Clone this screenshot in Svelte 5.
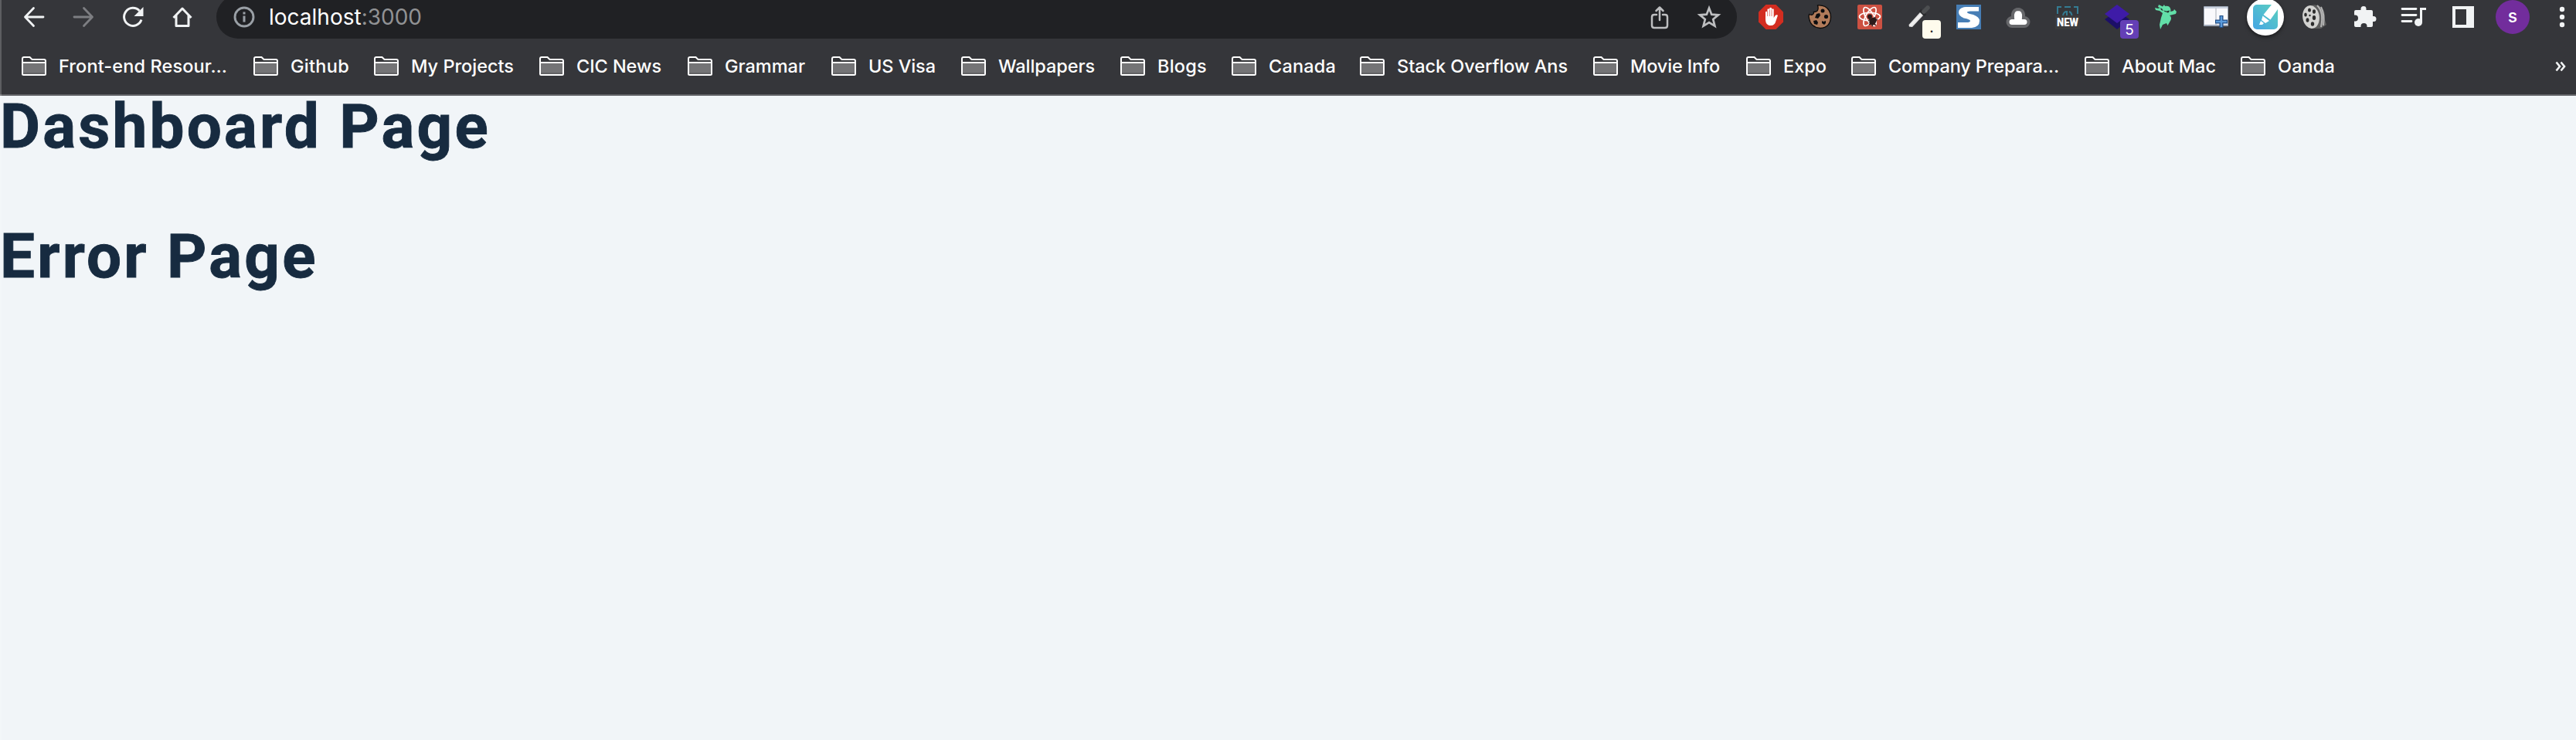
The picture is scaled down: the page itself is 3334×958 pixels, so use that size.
<script>
  const bookmarks = [
    ['Front-end Resour…', 300, 216], ['Github', 156, 74], ['My Projects', 214, 131],
    ['CIC News', 192, 108], ['Grammar', 186, 102], ['US Visa', 168, 85],
    ['Wallpapers', 206, 123], ['Blogs', 144, 62], ['Canada', 166, 85],
    ['Stack Overflow Ans', 302, 219], ['Movie Info', 198, 114], ['Expo', 136, 54],
    ['Company Prepara…', 302, 219], ['About Mac', 202, 120], ['Oanda', 156, 72]
  ];

  function track(node, width) {
    const natural = node.getBoundingClientRect().width;
    node.style.letterSpacing = `${(width + 2 - natural) / node.textContent.length}px`;
  }
</script>

<div class="window">
  <header>
    <div class="toolbar">
      <nav>
        <svg width="32" height="32" viewBox="0 0 32 32" fill="none" stroke="#f1f3f4" stroke-width="2.8" stroke-linecap="round" stroke-linejoin="round"><path d="M28 16H5M15.500 4.500L4.500 16l11 11.500"/></svg>
        <svg width="32" height="32" viewBox="0 0 32 32" fill="none" stroke="#7d7e82" stroke-width="2.8" stroke-linecap="round" stroke-linejoin="round"><path d="M4 16h23M16.500 4.500L27.500 16l-11 11.500"/></svg>
        <svg width="32" height="32" viewBox="0 0 32 32"><path d="M27 19.500A11.500 11.500 0 1 1 24.500 8" fill="none" stroke="#f1f3f4" stroke-width="3"/><path d="M29.500 3v12h-12z" fill="#f1f3f4"/></svg>
        <svg width="32" height="32" viewBox="0 0 32 32" fill="none" stroke="#f1f3f4" stroke-width="3"><path d="M4.500 17L16 5l11.500 12M8 14v13.500h16V14" stroke-linejoin="round"/></svg>
      </nav>
      <div class="omnibox">
        <svg class="info" width="28" height="28" viewBox="0 0 28 28"><circle cx="14" cy="14" r="12" fill="none" stroke="#9aa0a6" stroke-width="2.900"/><path d="M12.500 12.500h3v8h-3zM12.500 7.500h3v3h-3z" fill="#9aa0a6"/></svg>
        <span class="url"><b>localhost</b>:3000</span>
        <svg class="share" width="24" height="32" viewBox="0 0 24 32" fill="none" stroke="#bdbec0" stroke-width="2.500" stroke-linecap="round" stroke-linejoin="round"><path d="M8 13H5q-3 0-3 3v11q0 3 3 3h14q3 0 3-3V16q0-3-3-3h-3M12 20V4M7.500 8L12 3.500 16.500 8"/></svg>
        <svg width="32" height="32" viewBox="0 0 32 32" fill="none" stroke="#bdbec0" stroke-width="2.700"><path d="M16 4.500l3.200 8.200 8.800.7-6.800 5.600 2.200 8.600L16 23l-7.400 4.600 2.200-8.600L4 13.400l8.800-.7z"/></svg>
      </div>
      <div class="extensions">
        <svg viewBox="0 0 32 32"><path d="M9.500 0h13L32 9.500v13L22.500 32h-13L0 22.500v-13z" fill="#d32d20"/><path d="M9 17V9.500q1.300-1.700 2.500 0V6q1.400-1.700 2.700 0V4.500q1.500-1.500 2.800 0V6q1.400-1.600 2.700 0v11l2-3q1.500-1.400 3.300-.2L22.500 21q-1.500 6-6.500 6-7 0-7-8z" fill="#fff"/><path d="M11.600 9v6M14.300 6.500V15M17 6.500V15" stroke="#d32d20" stroke-width=".6"/></svg>
        <svg viewBox="0 0 32 32"><path d="M12.500 1Q18 .5 22 2.500 29.500 7 29.500 16 29 29.500 16 30.500 3.500 29.500 1.500 18q-1-3 0-5.500 3 1.500 5 0 1.500-1.200 1-3 3 0 4.500-1.500 2-2.500.5-7z" fill="#b17b5a" stroke="#0d0b0a" stroke-width="1.300"/><g fill="#0d0d0f"><circle cx="19" cy="8" r="2.500"/><path d="M11 12l4-1 1 3-3 4-4-1zM7 21l4-1 2 3-1 3-4-1zM18 21l2 1 3-1v3l-2 2-3-2z"/><circle cx="23.500" cy="15.500" r="2.600"/></g></svg>
        <svg viewBox="0 0 32 32"><rect width="32" height="32" rx="2" fill="#cc5142"/><g fill="none" stroke="#fff" stroke-width="1.700"><ellipse cx="16" cy="15.500" rx="13.500" ry="5.200"/><ellipse cx="16" cy="15.500" rx="13.500" ry="5.200" transform="rotate(60 16 15.500)"/><ellipse cx="16" cy="15.500" rx="13.500" ry="5.200" transform="rotate(120 16 15.500)"/></g><path d="M17 23.500L21 32H14l1-6z" fill="#cc5142"/><g fill="#2b1b1b"><circle cx="16" cy="15.500" r="3"/><ellipse cx="20" cy="21.500" rx="5.500" ry="4" transform="rotate(-48 20 21.500)"/></g><path d="M15 18l9 9M14 21l7-4M15 26l11-7M19 28l4-12" stroke="#2b1b1b" stroke-width="1.400"/></svg>
        <div class="badged"><svg viewBox="0 0 32 32"><defs><linearGradient id="tube" x1="0" y1="0" x2="1" y2="1"><stop stop-color="#777"/><stop offset=".5" stop-color="#f4f4f4"/><stop offset="1" stop-color="#999"/></linearGradient></defs><path d="M2.500 26L17 10l4 4L7 29l-4-.5z" fill="url(#tube)"/><path d="M17 7l7 7" stroke="#292b2d" stroke-width="3.500"/><path d="M22 9l5-5" stroke="#4c4e50" stroke-width="5.500" stroke-linecap="round"/></svg><i class="cream">.</i></div>
        <svg viewBox="0 0 32 32"><rect width="32" height="32" fill="#477eb5"/><path d="M29 3H12Q3 4 3 10q0 5 7 7.500 8 1.500 8 3.500 0 2-5 2H2v7h18q10-1 10-9 0-5-8-8-8-1.500-8-3 0-1.500 4-1.500h11z" fill="#fff"/></svg>
        <svg viewBox="0 0 32 32"><path d="M8 28h16a5.500 5.500 0 0 0 0-11H23q1-10.500-7-11-8 .5-7 11H8a5.500 5.500 0 0 0 0 11z" fill="#fff" stroke="#66676a" stroke-width="4"/></svg>
        <svg viewBox="0 0 32 32"><path d="M3 12V3h5m4 0h8m4 0h5v9M10 14q1-5 5-5v5m3-5q3 1 3.500 5" fill="none" stroke="#347b92" stroke-width="2"/><rect y="14" width="32" height="18" fill="#3c3c3d"/><text x="16" y="28" text-anchor="middle" textLength="28" lengthAdjust="spacingAndGlyphs" font-family="Roboto" font-size="14.500" font-weight="900" fill="#fff">NEW</text></svg>
        <div class="badged"><svg viewBox="0 0 32 32"><path d="M16 8l16 11-16 13L0 19z" fill="#1c0f68"/><path d="M16 0l16 12-16 12L0 12z" fill="#3e1ba7"/></svg><i class="violet">5</i></div>
        <svg viewBox="0 0 32 32"><path d="M6 0l5 2.500L13 0l1 2q7-1 7.500 5l-.5 2 4-1 1-2 3 3-1 3-8 2q3 2 1.500 6l-4 7-1.500-3-5 2-3 6-1-6 2-9 2-6-4-3-5-1-1-3 4 1 3-1 1 3 3 1-2-3-5-2z" fill="#62dfa8"/><path d="M12.500 7.500l3.500 1 4-1-1 2.500q-1.500 1-3-.5-2.500.5-3.500-2z" fill="#25372f"/></svg>
        <svg viewBox="0 0 32 32"><rect y="2" width="32" height="26" rx="1" fill="#9fa8b7"/><path d="M1 5h30v21H1z" fill="#f9f9fc"/><path d="M1 3h30v2H1z" fill="#cbd3df"/><path d="M16 4v22" stroke="#c5c7cf" stroke-width="1.500"/><path d="M23 14v16M15 22h16" stroke="#204c84" stroke-width="5"/><path d="M23 15v14M16 22h14" stroke="#5b9cdc" stroke-width="2.500"/></svg>
        <div class="badged marker"><svg viewBox="0 0 32 32"><defs><linearGradient id="aqua" x1="1" y1="0" x2="0" y2="1"><stop stop-color="#5bd0bf"/><stop offset="1" stop-color="#45a6e4"/></linearGradient></defs><rect width="32" height="32" rx="5" fill="url(#aqua)"/><path d="M24 0h5q3 0 3 3v3L22.500 19.500l-9-6.500zM12.500 14.500l8.500 6.500-5 3-5-4zM10 21l4 3-2 2H8z" fill="#fff"/></svg></div>
        <svg viewBox="0 0 32 32"><path d="M8 2Q17-2 24 3q6 5 5 17l2 6-7 5H11z" fill="#5d5d5d"/><path d="M19 1q9 9 5 28M24 3q5 10 3 24" fill="none" stroke="#b5b5b5" stroke-width="2"/><ellipse cx="11" cy="16" rx="10.800" ry="15" fill="#d2d2d0" transform="rotate(-8 11 16)"/><g fill="#2c2c2c"><ellipse cx="9" cy="7" rx="2" ry="2.500"/><ellipse cx="15" cy="9" rx="2" ry="2.800"/><ellipse cx="4" cy="13" rx="1.800" ry="2.600"/><ellipse cx="15" cy="17" rx="2.200" ry="3"/><ellipse cx="6.500" cy="20" rx="2" ry="2.800"/><ellipse cx="13" cy="25" rx="2.200" ry="2.800"/><circle cx="9.500" cy="14" r="1.200"/></g></svg>
        <svg viewBox="0 0 32 32"><path d="M5 7h6.500V5.500a3.500 3.500 0 0 1 7 0V7H25q2 0 2 2v6h1a3.500 3.500 0 0 1 0 7h-1v5q0 2-2 2h-5.500v-1a4 4 0 0 0-8 0v1H5q-2 0-2-2v-5.500h1a4 4 0 0 0 0-8H3V9q0-2 2-2z" fill="#f1f3f4"/></svg>
        <svg viewBox="0 0 32 32"><path d="M1 5.500h18M1 13.500h18M1 21.500h12" stroke="#f1f3f4" stroke-width="2.800" stroke-linecap="round"/><circle cx="22" cy="23" r="5" fill="#f1f3f4"/><path d="M25.500 23V5.500H32" fill="none" stroke="#f1f3f4" stroke-width="3"/></svg>
        <svg viewBox="0 0 32 32"><path d="M2 2h28v28H2zM6 6v20h14V6z" fill="#f1f3f4" fill-rule="evenodd"/></svg>
      </div>
      <div class="avatar">s</div>
      <svg class="menu" width="8" height="32" viewBox="0 0 8 32" fill="#f1f3f4"><circle cx="4" cy="6" r="3.200"/><circle cx="4" cy="16" r="3.200"/><circle cx="4" cy="26" r="3.200"/></svg>
    </div>
    <div class="bookmarks">
      {#each bookmarks as [name, slot, width]}
        <div class="bookmark" style:width="{slot}px">
          <svg width="32" height="26" viewBox="0 0 32 26"><path d="M1 3q0-2 2-2h7.500l3 3H29q2 0 2 2v16.500q0 1.500-1.500 1.500h-27Q1 24 1 22.500z" fill="#353639"/><path d="M2 9h28v14H2z" fill="#747476"/><path d="M2 21h28v2H2z" fill="#626264"/><path d="M1 3q0-2 2-2h7.500l3 3H29q2 0 2 2v16.500q0 1.500-1.500 1.500h-27Q1 24 1 22.500zM1 8h30" fill="none" stroke="#fff" stroke-width="2"/></svg>
          <span use:track={width}>{name}</span>
        </div>
      {/each}
      <svg class="more" width="14" height="14" viewBox="0 0 14 14" fill="none" stroke="#f1f3f4" stroke-width="2.600"><path d="M1.500 1.500L6 7l-4.500 5.500M7.500 1.500L12 7l-4.500 5.500"/></svg>
    </div>
  </header>
  <main>
    <h1>Dashboard Page</h1>
    <h1>Error Page</h1>
  </main>
</div>

<style>
  :global(body) { margin: 0; }
  .window { position: relative; width: 3334px; height: 958px; overflow: hidden; background: #f1f5f8; }
  .window::before { content: ''; position: absolute; z-index: 1; left: 0; top: 0; bottom: 0; width: 2px; background: rgba(255, 255, 255, .2); }
  header { box-sizing: border-box; height: 124px; background: #35363a; border-bottom: 2px solid #626367; font-family: Inter, sans-serif; }
  svg { display: block; flex: none; }
  .toolbar { display: flex; align-items: center; height: 44px; padding-left: 28px; }
  nav { display: flex; gap: 32px; width: 252px; }
  .omnibox { display: flex; align-items: center; box-sizing: border-box; width: 1968px; height: 56px; border-radius: 28px; padding: 0 20px 0 22px; background: #202124; flex: none; }
  .url { flex: 1; margin-left: 18px; color: #919294; font-size: 28px; line-height: 34px; letter-spacing: 0; }
  b { color: #fff; font-weight: 400; }
  .share { margin-right: 36px; }
  .extensions { display: flex; gap: 32px; margin-left: 28px; }
  .extensions svg { width: 32px; height: 32px; overflow: visible; }
  .badged { position: relative; width: 32px; height: 32px; }
  i { position: absolute; left: 20px; top: 20px; width: 24px; height: 24px; border-radius: 4px; font-size: 19px; font-style: normal; line-height: 26px; text-align: center; }
  .cream { background: #fefbed; color: #222; line-height: 20px; }
  .violet { background: #643fb6; color: #fff; }
  .marker::before { content: ''; position: absolute; left: -8px; top: -8px; width: 48px; height: 48px; border-radius: 50%; background: #fff; box-shadow: 0 2px 5px #0008; }
  .marker svg { position: relative; }
  .avatar { width: 44px; height: 44px; margin-left: 26px; border-radius: 50%; background: #722d9c; color: #fff; font-size: 23px; font-weight: 500; line-height: 42px; text-align: center; }
  .menu { margin-left: 38px; }
  .bookmarks { display: flex; align-items: center; height: 78px; padding: 6px 0 0 28px; box-sizing: border-box; }
  .bookmark { display: flex; align-items: center; gap: 16px; flex: none; }
  .bookmark span { color: #fff; font-size: 23.500px; font-weight: 500; line-height: 30px; white-space: nowrap; }
  .more { margin: 0 13px 0 auto; }
  h1 { margin: 0 0 88px; color: #172b40; font: 700 80px/80px Roboto, sans-serif; letter-spacing: 3.200px; -webkit-text-stroke: .9px #172b40; }
</style>
